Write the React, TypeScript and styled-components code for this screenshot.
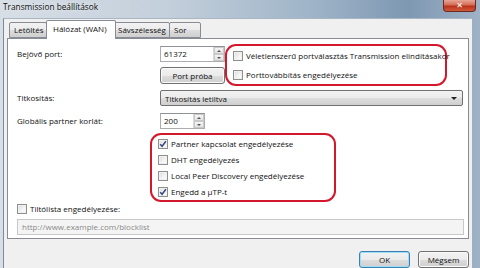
import React from "react";
import styled, { createGlobalStyle } from "styled-components";

const GlobalStyle = createGlobalStyle`
  html, body { margin: 0; padding: 0; width: 480px; height: 268px; overflow: hidden; }
  body { font-family: "Open Sans", "Noto Sans", sans-serif; font-size: 8px; color: #111; }
  * { box-sizing: border-box; }
`;

const Window = styled.div`
  width: 480px;
  height: 268px;
  display: flex;
  flex-direction: column;
  background: linear-gradient(90deg, #d7dee6 0%, #c3cfdb 35%, #9fb4c8 65%, #7e98b3 85%, #9fb2c6 100%);
`;

const TitleBar = styled.div`
  height: 18px;
  flex: none;
  display: flex;
  align-items: flex-start;
  padding-left: 3px;
`;

const Title = styled.div`
  font-size: 8.3px;
  line-height: 14px;
  color: #111;
  text-shadow: 0 0 6px rgba(255, 255, 255, 0.9);
`;

const CloseButton = styled.div`
  margin-left: auto;
  margin-right: 4px;
  width: 33px;
  height: 12px;
  border: 1px solid #6e2a22;
  border-top: none;
  border-radius: 0 0 4px 4px;
  background: linear-gradient(180deg, #e8a596 0%, #d46c55 45%, #b8321c 55%, #cf5a3c 100%);
  display: flex;
  align-items: center;
  justify-content: center;
  color: #fff;
  font-family: "DejaVu Sans", sans-serif;
  font-weight: bold;
  font-size: 8px;
  line-height: 1;
`;

const Frame = styled.div`
  flex: 1;
  display: flex;
  padding: 0 8px 0 3px;
  min-height: 0;
`;

const Client = styled.div`
  flex: 1;
  background: #f0f0f0;
  border-left: 1px solid #7d8a98;
  border-top: 1px solid #a9b6c3;
  display: flex;
  flex-direction: column;
  padding: 1px 3px 0 3px;
`;

const TabStrip = styled.div`
  display: flex;
  align-items: flex-end;
  height: 19px;
  padding-left: 2px;
  position: relative;
  z-index: 1;
`;

const Tab = styled.div<{ $active?: boolean; $w: number }>`
  width: ${(p) => p.$w}px;
  height: ${(p) => (p.$active ? 19 : 16)}px;
  margin: 0 ${(p) => (p.$active ? -2 : 0)}px ${(p) => (p.$active ? -1 : 0)}px;
  position: relative;
  z-index: ${(p) => (p.$active ? 2 : 1)};
  border: 1px solid #898c95;
  border-bottom: ${(p) => (p.$active ? "none" : "1px solid #898c95")};
  border-radius: 2px 2px 0 0;
  background: ${(p) =>
    p.$active ? "#ffffff" : "linear-gradient(180deg, #f2f2f2 0%, #ebebeb 50%, #dddddd 51%, #cfcfcf 100%)"};
  padding-left: ${(p) => (p.$active ? 6 : 4)}px;
  line-height: ${(p) => (p.$active ? 15 : 13)}px;
  white-space: nowrap;
  & + & { margin-left: ${(p) => (p.$active ? -2 : -1)}px; }
`;

const Panel = styled.div`
  background: #fff;
  border: 1px solid #898c95;
  height: 207px;
  padding: 7px 0 0 9px;
  display: flex;
  flex-direction: column;
`;

const PortSection = styled.div`
  display: flex;
  align-items: flex-start;
`;

const Label = styled.div<{ $w?: number }>`
  width: ${(p) => p.$w ?? 143}px;
  flex: none;
  line-height: 16px;
  white-space: nowrap;
`;

const ControlCol = styled.div`
  display: flex;
  flex-direction: column;
  gap: 5px;
  width: 65px;
  flex: none;
`;

const Spin = styled.div<{ $w: number }>`
  width: ${(p) => p.$w}px;
  height: 16px;
  border: 1px solid #abadb3;
  border-top-color: #8e9196;
  display: flex;
  background: #fff;
`;

const SpinText = styled.div`
  flex: 1;
  padding-left: 3px;
  line-height: 14px;
`;

const SpinArrows = styled.div`
  width: 11px;
  display: flex;
  flex-direction: column;
  border-left: 1px solid #d8d8d8;
`;

const SpinArrow = styled.div<{ $down?: boolean }>`
  flex: 1;
  background: linear-gradient(180deg, #f6f6f6, #e2e2e2);
  border: 1px solid #c9c9c9;
  display: flex;
  align-items: center;
  justify-content: center;
  &::after {
    content: "";
    border-left: 2px solid transparent;
    border-right: 2px solid transparent;
    ${(p) => (p.$down ? "border-top: 2px solid #555;" : "border-bottom: 2px solid #555;")}
  }
`;

const Button = styled.div<{ $w: number; $default?: boolean }>`
  width: ${(p) => p.$w}px;
  height: 17px;
  border: 1px solid ${(p) => (p.$default ? "#3c7fb1" : "#707070")};
  border-radius: 3px;
  background: linear-gradient(180deg, #f2f2f2 0%, #ebebeb 50%, #dddddd 51%, #cfcfcf 100%);
  box-shadow: inset 0 0 0 1px ${(p) => (p.$default ? "#9fdcf6" : "#fbfbfb")};
  text-align: center;
  line-height: 15px;
`;

const RedGroup = styled.div<{ $w: number; $h: number; $pl: number; $mt?: number }>`
  width: ${(p) => p.$w}px;
  height: ${(p) => p.$h}px;
  margin-top: ${(p) => p.$mt ?? 0}px;
  border: 2.5px solid #d3182c;
  border-radius: 11px;
  display: flex;
  flex-direction: column;
  justify-content: center;
  padding-left: ${(p) => p.$pl}px;
`;

const CheckRow = styled.div<{ $h: number }>`
  display: flex;
  align-items: center;
  gap: 3px;
  height: ${(p) => p.$h}px;
  white-space: nowrap;
`;

const Box = styled.div<{ $checked?: boolean }>`
  width: 10px;
  height: 10px;
  border: 1px solid #8e8f8f;
  background: linear-gradient(135deg, #dcdcdc 0%, #f4f4f4 60%, #ffffff 100%);
  box-shadow: inset 0 0 0 1px #f0f0f0;
  display: flex;
  align-items: center;
  justify-content: center;
  flex: none;
`;

const Row = styled.div<{ $mt: number }>`
  display: flex;
  align-items: center;
  margin-top: ${(p) => p.$mt}px;
`;

const Select = styled.div`
  width: 303px;
  height: 16px;
  border: 1px solid #707070;
  border-radius: 2px;
  background: linear-gradient(180deg, #f2f2f2 0%, #ebebeb 50%, #dddddd 51%, #cfcfcf 100%);
  display: flex;
  align-items: center;
  padding: 0 5px 0 4px;
  justify-content: space-between;
  &::after {
    content: "";
    border-left: 3px solid transparent;
    border-right: 3px solid transparent;
    border-top: 3px solid #222;
  }
`;

const Indent = styled.div<{ $mt: number; $ml: number }>`
  margin-top: ${(p) => p.$mt}px;
  margin-left: ${(p) => p.$ml}px;
`;

const UrlInput = styled.div`
  width: 447px;
  height: 16px;
  margin-top: 4px;
  border: 1px solid #c8c8c8;
  background: #f4f4f4;
  color: #8a8a8a;
  padding-left: 4px;
  line-height: 14px;
`;

const Footer = styled.div`
  display: flex;
  justify-content: flex-end;
  gap: 8px;
  padding: 12px 0 0 0;
`;

const Check = ({ checked }: { checked?: boolean }) => (
  <Box $checked={checked}>
    {checked && (
      <svg width="8" height="8" viewBox="0 0 8 8">
        <path d="M1.2 4.2 L3.1 6.3 L6.9 1.3" fill="none" stroke="#34487f" strokeWidth="1.5" />
      </svg>
    )}
  </Box>
);

const CheckItem = ({ label, checked, h }: { label: string; checked?: boolean; h: number }) => (
  <CheckRow $h={h}>
    <Check checked={checked} />
    <span>{label}</span>
  </CheckRow>
);

const SpinBox = ({ value, w }: { value: string; w: number }) => (
  <Spin $w={w}>
    <SpinText>{value}</SpinText>
    <SpinArrows>
      <SpinArrow />
      <SpinArrow $down />
    </SpinArrows>
  </Spin>
);

export default function App() {
  return (
    <>
      <GlobalStyle />
      <Window>
        <TitleBar>
          <Title>Transmission beállítások</Title>
          <CloseButton>✕</CloseButton>
        </TitleBar>
        <Frame>
          <Client>
            <TabStrip>
              <Tab $w={38}>Letöltés</Tab>
              <Tab $w={70} $active>Hálózat (WAN)</Tab>
              <Tab $w={57}>Sávszélesség</Tab>
              <Tab $w={32}>Sor</Tab>
            </TabStrip>
            <Panel>
              <PortSection>
                <Label>Bejövő port:</Label>
                <ControlCol>
                  <SpinBox value="61372" w={65} />
                  <Button $w={65}>Port próba</Button>
                </ControlCol>
                <RedGroup $w={222} $h={42} $pl={6} $mt={-2}>
                  <CheckItem h={19} label="Véletlenszerű portválasztás Transmission elindításakor" />
                  <CheckItem h={19} label="Porttovábbítás engedélyezése" />
                </RedGroup>
              </PortSection>
              <Row $mt={4}>
                <Label>Titkosítás:</Label>
                <Select>Titkosítás letiltva</Select>
              </Row>
              <Row $mt={7}>
                <Label>Globális partner korlát:</Label>
                <SpinBox value="200" w={45} />
              </Row>
              <Indent $mt={4} $ml={133}>
                <RedGroup $w={186} $h={69} $pl={6}>
                  <CheckItem h={16} checked label="Partner kapcsolat engedélyezése" />
                  <CheckItem h={16} label="DHT engedélyezés" />
                  <CheckItem h={16} label="Local Peer Discovery engedélyezése" />
                  <CheckItem h={16} checked label="Engedd a µTP-t" />
                </RedGroup>
              </Indent>
              <Indent $mt={0} $ml={0}>
                <CheckItem h={13} label="Tiltólista engedélyezése:" />
              </Indent>
              <UrlInput>http://www.example.com/blocklist</UrlInput>
            </Panel>
            <Footer>
              <Button $w={51} $default>OK</Button>
              <Button $w={51}>Mégsem</Button>
            </Footer>
          </Client>
        </Frame>
      </Window>
    </>
  );
}
